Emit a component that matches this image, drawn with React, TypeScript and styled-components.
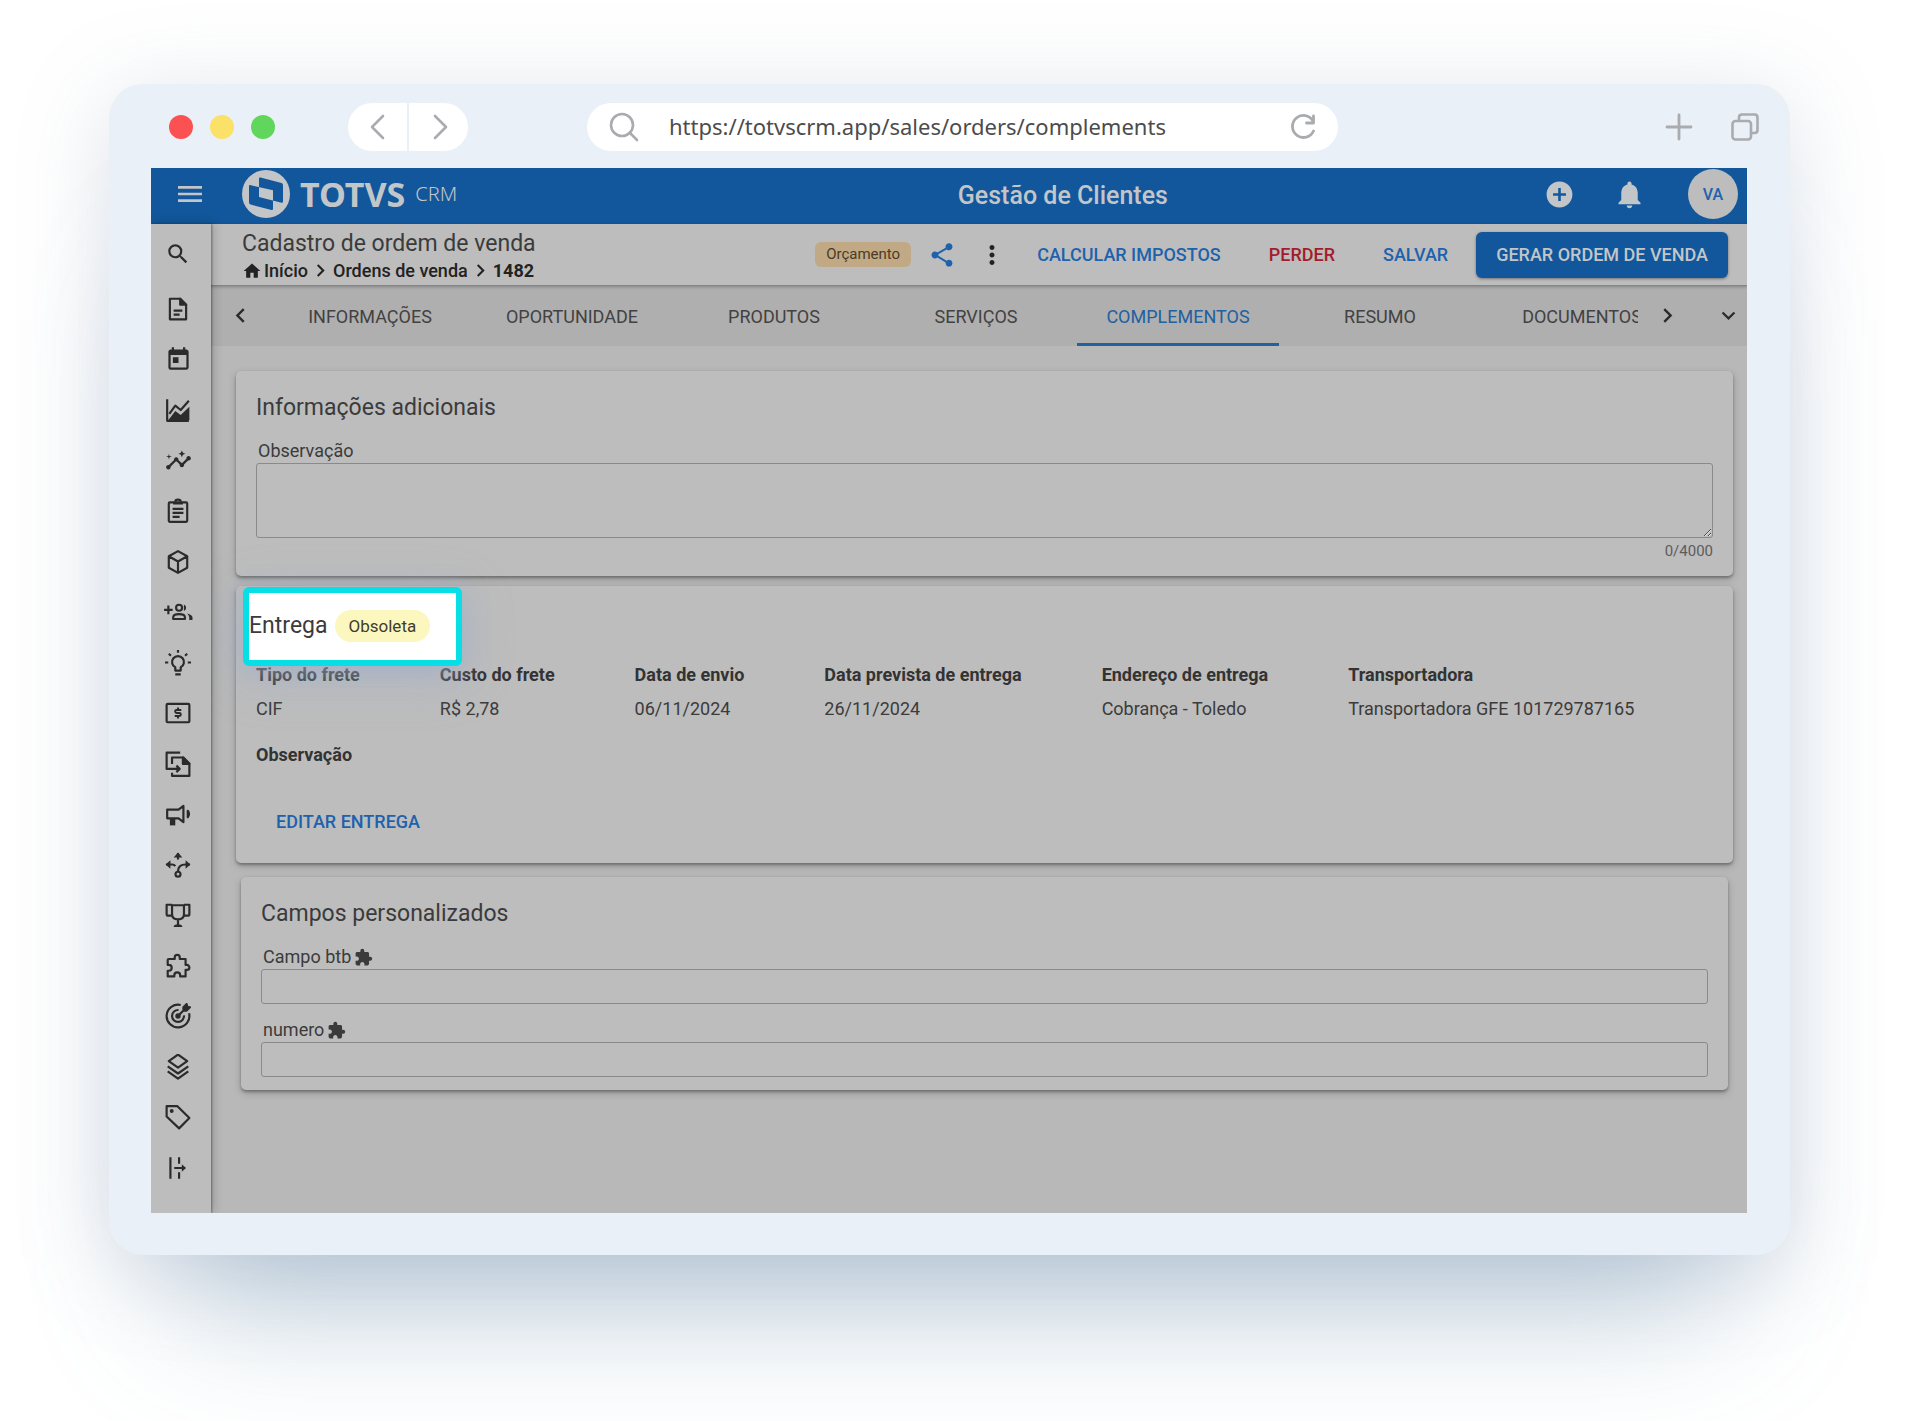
import React from "react";
import styled, { createGlobalStyle } from "styled-components";
import {
  MdAddCircle,
  MdChevronLeft,
  MdChevronRight,
  MdExpandMore,
  MdExtension,
  MdHome,
  MdInsights,
  MdMenu,
  MdMoreVert,
  MdNotifications,
  MdSearch,
  MdShare,
  MdToday,
} from "react-icons/md";

const c = {
  frame: "#e9f0f7",
  chromeIcon: "#a9abae",
  blue: "#12579b",
  onBlue: "#c3c6c9",
  link: "#1e62ad",
  danger: "#a31c2c",
  surface: "#bdbdbd",
  page: "#b8b8b8",
  tabs: "#afafaf",
  text: "#3b3b3b",
  strong: "#222222",
  line: "#8a8a8a",
  cyan: "#06dfe5",
};

const GlobalStyle = createGlobalStyle`
  *, *::before, *::after { box-sizing: border-box; }
  body {
    margin: 0;
    background: #ffffff;
    color: ${c.text};
    font-family: Roboto, "Liberation Sans", sans-serif;
  }
  button, input, textarea { font: inherit; color: inherit; }
  button { border: 0; padding: 0; background: none; cursor: pointer; }
  h1, h2, p, dl, dt, dd, ol, ul { margin: 0; padding: 0; font-weight: 400; list-style: none; }
  svg { display: block; flex: none; }
`;

const Stage = styled.div`
  min-height: 100vh;
  padding: 84px 127px 166px 109px;
  overflow: hidden;
`;

const Browser = styled.div`
  padding: 0 43px 42px 42px;
  border-radius: 34px;
  background: ${c.frame};
  box-shadow:
    0 14px 90px rgba(120, 140, 170, 0.26),
    0 120px 130px -70px rgba(110, 145, 175, 0.44);
`;

const Chrome = styled.div`
  display: flex;
  align-items: center;
  height: 84px;
  padding: 2px 0 0 18px;
  color: ${c.chromeIcon};
`;

const Lights = styled.div`
  display: flex;
  gap: 17px;
  margin-right: 73px;
`;

const Light = styled.span<{ $color: string }>`
  width: 24px;
  height: 24px;
  border-radius: 50%;
  background: ${(p) => p.$color};
`;

const History = styled.div`
  display: flex;
  gap: 2px;
  margin-right: 119px;
  border-radius: 24px;
  overflow: hidden;
`;

const HistoryButton = styled.button`
  display: flex;
  align-items: center;
  justify-content: center;
  width: 59px;
  height: 48px;
  background: #ffffff;
  color: ${c.chromeIcon};
`;

const AddressBar = styled.label`
  display: flex;
  align-items: center;
  gap: 30px;
  flex: 0 1 751px;
  height: 48px;
  padding: 0 22px;
  border-radius: 24px;
  background: #ffffff;
`;

const Address = styled.input`
  flex: 1;
  min-width: 0;
  padding: 0 0 2px;
  border: 0;
  outline: 0;
  background: transparent;
  color: #4c4c4c;
  font-family: "Noto Sans", "Open Sans", sans-serif;
  font-size: 22px;
  line-height: 32px;
`;

const ChromeActions = styled.div`
  display: flex;
  gap: 38px;
  margin-left: auto;
  margin-right: -12px;
`;

const ChromeButton = styled.button`
  color: ${c.chromeIcon};
`;

const AppFrame = styled.div`
  display: flex;
  flex-direction: column;
  overflow: hidden;
  background: ${c.page};
`;

const TopBar = styled.header`
  display: grid;
  grid-template-columns: 11fr auto 8fr;
  align-items: center;
  height: 56px;
  padding: 0 9px 4px 23px;
  background: ${c.blue};
  color: ${c.onBlue};
`;

const Brand = styled.div`
  display: flex;
  align-items: center;
`;

const TopButton = styled.button`
  display: flex;
  color: ${c.onBlue};
`;

const LogoLink = styled.a`
  display: flex;
  align-items: center;
  gap: 10px;
  margin-left: 36px;
  color: ${c.onBlue};
  text-decoration: none;
  font-family: "Noto Sans", "Open Sans", sans-serif;
`;

const BrandName = styled.span`
  font-size: 34px;
  font-weight: 700;
  line-height: 46px;
`;

const BrandSuffix = styled.span`
  font-size: 20px;
  font-weight: 300;
  line-height: 46px;
`;

const AppTitle = styled.span`
  padding-top: 4px;
  font-size: 25px;
  font-weight: 500;
  line-height: 32px;
`;

const TopActions = styled.div`
  display: flex;
  align-items: center;
  justify-content: flex-end;
  gap: 38px;
`;

const Avatar = styled.button`
  width: 50px;
  height: 50px;
  margin-left: 4px;
  border-radius: 50%;
  background: ${c.surface};
  color: ${c.link};
  font-size: 16px;
  font-weight: 500;
`;

const Body = styled.div`
  display: flex;
`;

const Sidebar = styled.nav`
  position: relative;
  z-index: 1;
  display: flex;
  flex-direction: column;
  flex: none;
  width: 60px;
  padding-bottom: 20px;
  background: ${c.surface};
  box-shadow: 1px 0 2px rgba(0, 0, 0, 0.35), 2px 0 10px rgba(0, 0, 0, 0.2);
`;

const SideButton = styled.button<{ $first?: boolean }>`
  display: flex;
  align-items: center;
  justify-content: center;
  flex: ${(p) => (p.$first ? "0 0 60px" : "1 1 50px")};
  padding-right: 6px;
  color: #2b2b2b;
`;

const Main = styled.main`
  flex: 1;
  min-width: 0;
`;

const PageHeader = styled.div`
  position: relative;
  display: flex;
  align-items: center;
  justify-content: space-between;
  height: 62px;
  padding: 0 19px 0 31px;
  background: ${c.surface};
  border-bottom: 1px solid #858585;
  box-shadow: 0 1px 3px rgba(0, 0, 0, 0.25);
`;

const PageTitle = styled.h1`
  font-size: 23px;
  line-height: 32px;
`;

const Crumbs = styled.ol`
  display: flex;
  align-items: center;
  height: 22px;
  color: ${c.strong};
  font-size: 18px;
  line-height: 22px;
`;

const Crumb = styled.li<{ $current?: boolean }>`
  display: flex;
  align-items: center;
  font-weight: ${(p) => (p.$current ? 700 : 500)};

  a {
    display: flex;
    align-items: center;
    gap: 2px;
    color: inherit;
    text-decoration: none;
  }
`;

const HeaderActions = styled.div`
  display: flex;
  align-items: center;
`;

const StatusTag = styled.span`
  margin-right: 6px;
  padding: 0 11px;
  border-radius: 6px;
  background: #c0a984;
  color: #4a3c28;
  font-size: 15px;
  line-height: 25px;
`;

const IconButton = styled.button<{ $color: string }>`
  display: flex;
  justify-content: center;
  width: 50px;
  color: ${(p) => p.$color};
`;

const TextButton = styled.button<{ $tone?: "danger" }>`
  height: 46px;
  padding: 0 20px;
  color: ${(p) => (p.$tone === "danger" ? c.danger : c.link)};
  font-size: 18px;
  font-weight: 500;
  line-height: 24px;
  white-space: nowrap;
`;

const ActionGroup = styled.div`
  display: flex;
  gap: 8px;
`;

const PrimaryButton = styled(TextButton)`
  border-radius: 6px;
  background: ${c.blue};
  box-shadow: 0 1px 3px rgba(0, 0, 0, 0.4);
  color: ${c.onBlue};
`;

const TabBar = styled.div`
  display: flex;
  height: 60px;
  background: ${c.tabs};
`;

const TabArrow = styled.button`
  display: flex;
  align-items: center;
  justify-content: center;
  flex: 0 0 58px;
  padding-bottom: 1px;
  color: #2b2b2b;
`;

const TabMenu = styled(TabArrow)`
  flex-basis: 51px;
  padding-left: 13px;
`;

const TabList = styled.div`
  display: flex;
  flex: 1;
  min-width: 0;
  overflow: hidden;
`;

const Tab = styled.button<{ $active?: boolean }>`
  flex: 0 0 202px;
  padding-top: 2px;
  box-shadow: ${(p) => (p.$active ? "inset 0 -3px #22609f" : "none")};
  color: ${(p) => (p.$active ? "#22609f" : "#424242")};
  font-size: 18px;
  line-height: 24px;
`;

const Content = styled.div`
  display: flex;
  flex-direction: column;
  padding: 25px 14px 123px 25px;
`;

const Card = styled.section<{ $inset?: boolean }>`
  margin: ${(p) => (p.$inset ? "14px 5px 0" : "0 0 10px")};
  padding: ${(p) => (p.$inset ? "20px 20px 13px" : "20px 20px 15px")};
  border-radius: 5px;
  background: ${c.surface};
  box-shadow: 0 2px 3px rgba(0, 0, 0, 0.3), 0 3px 8px rgba(0, 0, 0, 0.18);
`;

const DeliveryCard = styled(Card)`
  margin-bottom: 0;
  padding: 1px 20px 18px;
`;

const CardTitle = styled.h2`
  font-size: 23px;
  line-height: 34px;
`;

const Field = styled.div`
  display: flex;
  flex-direction: column;
  margin-top: 14px;
`;

const FieldLabel = styled.label`
  display: flex;
  align-items: center;
  gap: 3px;
  padding-left: 2px;
  font-size: 18px;
  line-height: 24px;
`;

const TextArea = styled.textarea`
  display: block;
  width: 100%;
  height: 75px;
  border: 1px solid ${c.line};
  border-radius: 3px;
  outline: 0;
  background: transparent;
  resize: vertical;
`;

const TextInput = styled.input`
  width: 100%;
  height: 35px;
  padding: 0 8px;
  border: 1px solid ${c.line};
  border-radius: 3px;
  outline: 0;
  background: transparent;
`;

const Counter = styled.p`
  margin-top: 3px;
  color: #5c5c5c;
  font-size: 15px;
  line-height: 20px;
  text-align: right;
`;

const Spotlight = styled.div`
  position: relative;
  display: flex;
  align-items: center;
  gap: 7px;
  width: 219px;
  height: 79px;
  margin-left: -13px;
  padding-bottom: 2px;
  border: 6px solid ${c.cyan};
  border-radius: 6px;
  background: #ffffff;
  box-shadow:
    0 6px 24px rgba(160, 175, 200, 0.6),
    0 10px 50px rgba(150, 170, 205, 0.35);
`;

const Pill = styled.span`
  padding: 0 14px;
  border-radius: 16px;
  background: #fcf7bf;
  color: #403d2c;
  font-size: 17px;
  line-height: 32px;
`;

const Details = styled.dl`
  display: flex;
  flex-wrap: wrap;
  gap: 25px 80px;
  font-size: 18px;

  dt {
    color: #333333;
    font-weight: 700;
    line-height: 18px;
    white-space: nowrap;
  }

  dd {
    margin-top: 13px;
    line-height: 24px;
    white-space: nowrap;
  }
`;

const DetailsNote = styled(Details)`
  margin: 25px 0 35px;
`;

const HistoryIcon = ({ d }: { d: string }) => (
  <svg width="28" height="28" viewBox="0 0 28 28" fill="none" stroke="currentColor" strokeWidth="2.6" strokeLinecap="round" strokeLinejoin="round">
    <path d={d} />
  </svg>
);

const Logo = () => (
  <svg width="48" height="48" viewBox="0 0 48 48">
    <circle cx="24" cy="24" r="24" fill={c.onBlue} />
    <path
      fillRule="evenodd"
      fill={c.blue}
      d="M8 15Q7 14.700 7 16V32.500Q7 34 8.500 34.500L29.500 40Q31 40.300 31 39V20.300ZM18.500 7.500Q17 7 17 8.500V27L39.500 32.800Q41 33 41 31.500V15Q41 13.400 39.500 13Z"
    />
  </svg>
);

type Glyph = { label: string; draw: React.ReactNode };

const Outline = ({ children }: { children: React.ReactNode }) => (
  <svg width="26" height="26" viewBox="0 0 24 24" fill="none" stroke="currentColor" strokeWidth="2" strokeLinejoin="round">
    {children}
  </svg>
);

const sideItems: Glyph[] = [
  {
    label: "Documentos",
    draw: (
      <Outline>
        <path d="M4.500 2.500H14l5.500 5.500v13.500h-15z" />
        <path d="M14 2.500V8h5.500z" fill="currentColor" />
        <path d="M8 13.500h8M8 17.200h5.500" />
      </Outline>
    ),
  },
  { label: "Agenda", draw: <MdToday size={27} /> },
  {
    label: "Gráficos",
    draw: (
      <Outline>
        <path d="M2 2v20h20" />
        <path d="M4 15.500 9.500 8l5 4L22 3.500" />
        <path d="M3 21.500 9.500 13l5 3.500L22.500 9v12.500z" fill="currentColor" stroke="none" />
      </Outline>
    ),
  },
  { label: "Indicadores", draw: <MdInsights size={27} /> },
  {
    label: "Tarefas",
    draw: (
      <Outline>
        <rect x="3.500" y="4" width="17" height="18" rx="1" />
        <path d="M7.500 5h9M7 10h10M7 13.700h10M7 17.400h6.500" />
        <path d="M9.500 3.500a2.500 2 0 0 1 5 0" />
      </Outline>
    ),
  },
  {
    label: "Produtos",
    draw: (
      <Outline>
        <path d="M12 2 20.500 6.700v10.600L12 22l-8.500-4.700V6.700zM3.500 6.700 12 11.500l8.500-4.800M12 11.500V22" />
      </Outline>
    ),
  },
  {
    label: "Contatos",
    draw: (
      <svg width="30" height="26" viewBox="-2 0 28 24" fill="none" stroke="currentColor" strokeWidth="2" strokeLinejoin="round">
        <path d="M-1 10h8M3 6v8" />
        <circle cx="13" cy="8" r="2.800" />
        <path d="M7.500 18.500V17q0-3 5.500-3t5.500 3v1.500z" />
        <path d="M17.500 5a3.200 3.200 0 0 1 0 6zM20.500 13.300q5 1.200 5 3.700v2.500h-3V17q0-2-2-3.700z" fill="currentColor" stroke="none" />
      </svg>
    ),
  },
  {
    label: "Ideias",
    draw: (
      <Outline>
        <path d="M9.500 19v-3a5.500 5.500 0 1 1 5 0v3z" />
        <path d="M9.500 22.500h5M12 0v2.500M0 11.500h3M21 11.500h3M3.500 3.500 5.500 5.300M20.500 3.500 18.500 5.300" />
      </Outline>
    ),
  },
  {
    label: "Financeiro",
    draw: (
      <Outline>
        <rect x="1.500" y="3.500" width="21" height="17" rx="1" />
        <path d="M15 9.200h-4.200a1.400 1.400 0 0 0 0 2.800h2.400a1.400 1.400 0 0 1 0 2.800H9M12 7v2.200M12 14.800V17" strokeWidth="1.800" />
      </Outline>
    ),
  },
  {
    label: "Transferências",
    draw: (
      <Outline>
        <path d="M14 1.500H1.500v15H13M10.500 13.500l3 3-3 3" />
        <path d="M6.500 12V6H17l5.500 5.500V23h-16v-3" />
        <path d="M16.500 6v6h6z" fill="currentColor" />
      </Outline>
    ),
  },
  {
    label: "Campanhas",
    draw: (
      <Outline>
        <path d="M2 8h10.500L17 4.500v15L12.500 16H2z" />
        <path d="M4.500 16h5v6.500h-5z" fill="currentColor" stroke="none" />
        <path d="M21 9a4.500 4.500 0 0 1 0 6z" fill="currentColor" />
      </Outline>
    ),
  },
  {
    label: "Rotas",
    draw: (
      <Outline>
        <path d="M12 1v6M1 11.500h5.500q2 0 3 1.500M23 11.500h-4q-7 0-7 6.500" />
        <path d="M8 5l4-4.500L16 5zM5 7.500.500 11.500 5 15.500zM19 7.500l4.500 4-4.500 4z" fill="currentColor" stroke="none" />
        <circle cx="12" cy="20.500" r="2.300" />
      </Outline>
    ),
  },
  {
    label: "Metas",
    draw: (
      <Outline>
        <path d="M6.500 3h11v8q0 5-5.500 5t-5.500-5zM6.500 2.500h-5v9q0 1 1 1h4M17.500 2.500h5v9q0 1-1 1h-4M12 16v6" />
        <path d="M8 23q0-2.500 4-2.500t4 2.500z" fill="currentColor" stroke="none" />
      </Outline>
    ),
  },
  {
    label: "Integrações",
    draw: (
      <Outline>
        <path d="M3.500 5.500H9V4a2.300 2.300 0 0 1 4.600 0v1.500H19V11h1.200a2.300 2.300 0 0 1 0 4.600H19v6h-5v-1a2.700 2.700 0 0 0-5.400 0v1H2.500v-5.200h1a2.700 2.700 0 0 0 0-5.400h-1v-4.500q0-1 1-1z" />
      </Outline>
    ),
  },
  {
    label: "Objetivos",
    draw: (
      <Outline>
        <path d="M14.500 1.800A10.500 10.500 0 1 0 22.200 9.500" />
        <path d="M12.500 6.500A5.500 5.500 0 1 0 17.500 11.500" />
        <circle cx="12" cy="12" r="1.500" fill="currentColor" />
        <path d="M12 12 17 7V4l3-3 .500 2.500L23 4l-3 3h-3" fill="currentColor" />
      </Outline>
    ),
  },
  {
    label: "Camadas",
    draw: (
      <Outline>
        <path d="M12 0.500 20.500 6.500 12 12.500 3.500 6.500zM2.500 11.500 12 18l9.500-6.500M2.500 16 12 22.800 21.500 16" />
      </Outline>
    ),
  },
  {
    label: "Etiquetas",
    draw: (
      <Outline>
        <path d="M1.500 2h10l11 11-9.500 9.500L1.500 11.500z" />
        <circle cx="6.200" cy="6.500" r="1.800" fill="currentColor" stroke="none" />
      </Outline>
    ),
  },
  {
    label: "Expandir menu",
    draw: (
      <Outline>
        <path d="M5 2v20M13 2v6M13 16v6M8.500 12h9" />
        <path d="M15.500 8.500 19.500 12l-4 3.500z" fill="currentColor" stroke="none" />
      </Outline>
    ),
  },
];

const tabs = ["INFORMAÇÕES", "OPORTUNIDADE", "PRODUTOS", "SERVIÇOS", "COMPLEMENTOS", "RESUMO", "DOCUMENTOS"];

const details = [
  ["Tipo do frete", "CIF"],
  ["Custo do frete", "R$ 2,78"],
  ["Data de envio", "06/11/2024"],
  ["Data prevista de entrega", "26/11/2024"],
  ["Endereço de entrega", "Cobrança - Toledo"],
  ["Transportadora", "Transportadora GFE 101729787165"],
];

const customFields = [
  { id: "campo-btb", label: "Campo btb" },
  { id: "numero", label: "numero" },
];

function BrowserChrome() {
  return (
    <Chrome>
      <Lights>
        <Light $color="#fb5153" />
        <Light $color="#fbe168" />
        <Light $color="#61d65c" />
      </Lights>
      <History>
        <HistoryButton aria-label="Voltar">
          <HistoryIcon d="M19 3 8 14l11 11" />
        </HistoryButton>
        <HistoryButton aria-label="Avançar">
          <HistoryIcon d="M10 3l11 11-11 11" />
        </HistoryButton>
      </History>
      <AddressBar>
        <svg width="30" height="30" viewBox="0 0 30 30" fill="none" stroke="currentColor" strokeWidth="2.600" strokeLinecap="round">
          <circle cx="13" cy="13" r="11" />
          <path d="m21 21 7 7" />
        </svg>
        <Address aria-label="Endereço" defaultValue="https://totvscrm.app/sales/orders/complements" />
        <svg width="26" height="26" viewBox="0 0 26 26" fill="none" stroke="currentColor" strokeWidth="2.800" strokeLinecap="round" strokeLinejoin="round">
          <path d="M23 7A11 11 0 1 0 23.500 17M23.500 2v7h-7" />
        </svg>
      </AddressBar>
      <ChromeActions>
        <ChromeButton aria-label="Nova aba">
          <svg width="28" height="28" viewBox="0 0 28 28" stroke="currentColor" strokeWidth="2.800" strokeLinecap="round">
            <path d="M14 2v24M2 14h24" />
          </svg>
        </ChromeButton>
        <ChromeButton aria-label="Abas">
          <svg width="28" height="28" viewBox="0 0 28 28" fill="none" stroke="currentColor" strokeWidth="2.600" strokeLinejoin="round">
            <rect x="1.500" y="8" width="18.500" height="18.500" rx="3" />
            <path d="M8 8V4.500q0-3 3-3h12.500q3 0 3 3V17q0 3-3 3H20" />
          </svg>
        </ChromeButton>
      </ChromeActions>
    </Chrome>
  );
}

export default function App() {
  return (
    <>
      <GlobalStyle />
      <Stage>
        <Browser>
          <BrowserChrome />
          <AppFrame>
            <TopBar>
              <Brand>
                <TopButton aria-label="Menu">
                  <MdMenu size={32} />
                </TopButton>
                <LogoLink href="#" aria-label="TOTVS CRM">
                  <Logo />
                  <BrandName>TOTVS</BrandName>
                  <BrandSuffix>CRM</BrandSuffix>
                </LogoLink>
              </Brand>
              <AppTitle>Gestão de Clientes</AppTitle>
              <TopActions>
                <TopButton aria-label="Adicionar">
                  <MdAddCircle size={31} />
                </TopButton>
                <TopButton aria-label="Notificações">
                  <MdNotifications size={33} />
                </TopButton>
                <Avatar>VA</Avatar>
              </TopActions>
            </TopBar>
            <Body>
              <Sidebar>
                <SideButton $first aria-label="Pesquisar">
                  <MdSearch size={26} />
                </SideButton>
                {sideItems.map((item) => (
                  <SideButton key={item.label} aria-label={item.label}>
                    {item.draw}
                  </SideButton>
                ))}
              </Sidebar>
              <Main>
                <PageHeader>
                  <div>
                    <PageTitle>Cadastro de ordem de venda</PageTitle>
                    <Crumbs>
                      <Crumb>
                        <a href="#">
                          <MdHome size={20} />
                          Início
                        </a>
                      </Crumb>
                      <MdChevronRight size={25} />
                      <Crumb>
                        <a href="#">Ordens de venda</a>
                      </Crumb>
                      <MdChevronRight size={25} />
                      <Crumb $current>1482</Crumb>
                    </Crumbs>
                  </div>
                  <HeaderActions>
                    <StatusTag>Orçamento</StatusTag>
                    <IconButton $color={c.link} aria-label="Compartilhar">
                      <MdShare size={28} />
                    </IconButton>
                    <IconButton $color="#222222" aria-label="Mais opções">
                      <MdMoreVert size={30} />
                    </IconButton>
                    <ActionGroup>
                      <TextButton>CALCULAR IMPOSTOS</TextButton>
                      <TextButton $tone="danger">PERDER</TextButton>
                      <TextButton>SALVAR</TextButton>
                      <PrimaryButton>GERAR ORDEM DE VENDA</PrimaryButton>
                    </ActionGroup>
                  </HeaderActions>
                </PageHeader>
                <TabBar>
                  <TabArrow aria-label="Abas anteriores">
                    <MdChevronLeft size={29} />
                  </TabArrow>
                  <TabList role="tablist">
                    {tabs.map((tab) => (
                      <Tab key={tab} role="tab" aria-selected={tab === "COMPLEMENTOS"} $active={tab === "COMPLEMENTOS"}>
                        {tab}
                      </Tab>
                    ))}
                  </TabList>
                  <TabArrow aria-label="Próximas abas">
                    <MdChevronRight size={29} />
                  </TabArrow>
                  <TabMenu aria-label="Todas as abas">
                    <MdExpandMore size={27} />
                  </TabMenu>
                </TabBar>
                <Content>
                  <Card>
                    <CardTitle>Informações adicionais</CardTitle>
                    <Field>
                      <FieldLabel htmlFor="observacao">Observação</FieldLabel>
                      <TextArea id="observacao" />
                    </Field>
                    <Counter>0/4000</Counter>
                  </Card>
                  <DeliveryCard>
                    <Spotlight>
                      <CardTitle>Entrega</CardTitle>
                      <Pill>Obsoleta</Pill>
                    </Spotlight>
                    <Details>
                      {details.map(([name, value]) => (
                        <div key={name}>
                          <dt>{name}</dt>
                          <dd>{value}</dd>
                        </div>
                      ))}
                    </Details>
                    <DetailsNote>
                      <dt>Observação</dt>
                    </DetailsNote>
                    <TextButton>EDITAR ENTREGA</TextButton>
                  </DeliveryCard>
                  <Card $inset>
                    <CardTitle>Campos personalizados</CardTitle>
                    {customFields.map((field) => (
                      <Field key={field.id}>
                        <FieldLabel htmlFor={field.id}>
                          {field.label}
                          <MdExtension size={19} />
                        </FieldLabel>
                        <TextInput id={field.id} type="text" />
                      </Field>
                    ))}
                  </Card>
                </Content>
              </Main>
            </Body>
          </AppFrame>
        </Browser>
      </Stage>
    </>
  );
}
